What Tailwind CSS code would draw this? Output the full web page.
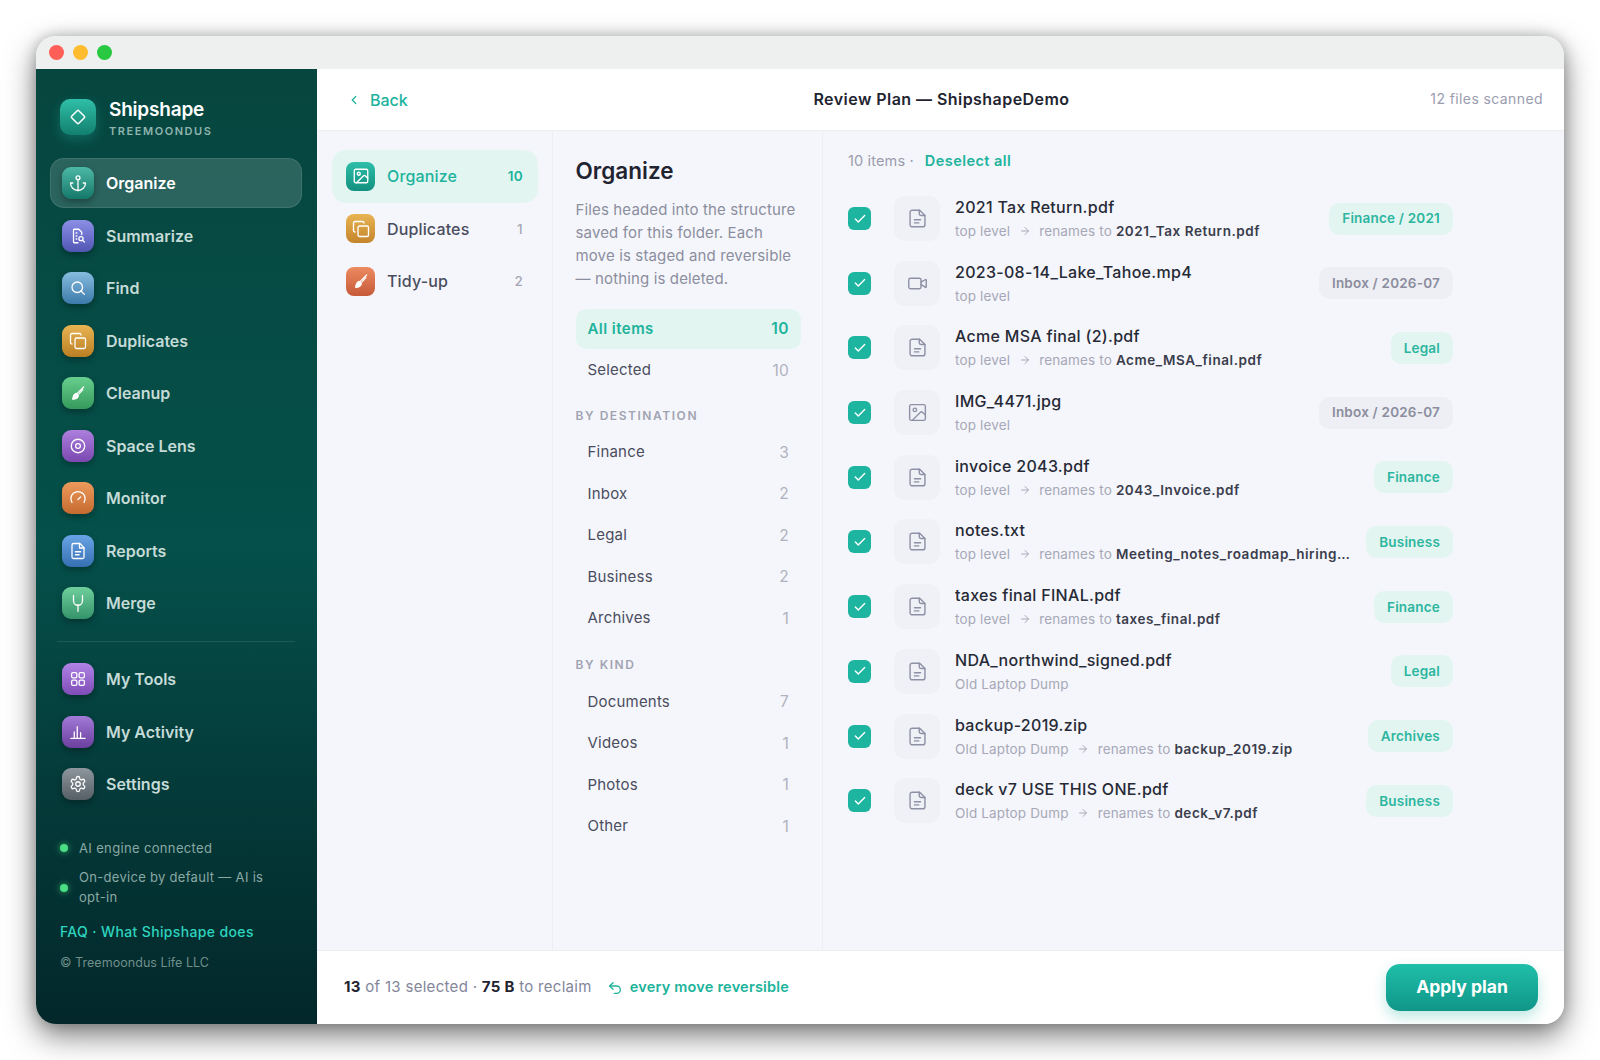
<!DOCTYPE html>
<html lang="en">
  <head>
    <meta charset="UTF-8" />
    <title>Shipshape</title>
    <script src="https://cdn.jsdelivr.net/npm/@tailwindcss/browser@4"></script>
  </head>
  <body class="bg-white h-[1060px] overflow-hidden pt-[36px] px-[36px] font-['Inter',sans-serif] antialiased">
    <div class="w-[1528px] h-[988px] rounded-[20px] overflow-hidden flex flex-col shadow-[0_12px_30px_rgba(0,0,0,0.5),0_0_14px_rgba(0,0,0,0.22)]">
      <!-- Title bar -->
      <div class="h-[33px] bg-[#edf0ef] flex items-center gap-[9px] pl-[13px] shrink-0">
        <span class="w-[15px] h-[15px] rounded-full bg-[#ff5f57]"></span>
        <span class="w-[15px] h-[15px] rounded-full bg-[#febc2e]"></span>
        <span class="w-[15px] h-[15px] rounded-full bg-[#28c840]"></span>
      </div>

      <div class="flex flex-1 min-h-0">
        <!-- Sidebar -->
        <aside class="w-[281px] shrink-0 flex flex-col pl-[14px] pr-[15px] bg-linear-to-b from-[#06463f] via-[#05504a] to-[#03272a]">
          <div class="flex items-center gap-[13px] h-[36px] mt-[30px] ml-[10px]">
            <div class="w-[36px] h-[36px] rounded-[10px] bg-linear-to-b from-[#2fbfa8] to-[#12806f] flex items-center justify-center shadow-[0_4px_12px_rgba(45,212,191,0.25)]">
              <svg class="w-[22px] h-[22px]" viewBox="0 0 24 24" fill="none" stroke="white" stroke-width="1.6"><rect x="6.5" y="6.5" width="11" height="11" rx="1.2" transform="rotate(45 12 12)" /></svg>
            </div>
            <div>
              <div class="text-[19px] leading-[26px] font-semibold text-white tracking-[-0.2px]">Shipshape</div>
              <div class="mt-[1px] text-[11px] leading-[14px] font-semibold text-[#8fb5ae] tracking-[1.55px]">TREEMOONDUS</div>
            </div>
          </div>
          <nav id="mainNav" class="mt-[23px] flex flex-col gap-[2.5px]"></nav>
          <div class="h-px bg-white/10 mx-[7px] mt-[13px]"></div>
          <nav id="toolNav" class="mt-[12px] flex flex-col gap-[2.5px]"></nav>
          <div class="mt-[29px] ml-[10px] flex items-center gap-[11px] text-[13px] leading-[20px] tracking-[0.35px] text-[#8aa9a4]">
            <span class="w-[8px] h-[8px] rounded-full bg-[#4ade80] shadow-[0_0_6px_rgba(74,222,128,0.7)] shrink-0"></span>
            AI engine connected
          </div>
          <div class="mt-[10px] ml-[10px] flex items-center gap-[11px] text-[13px] leading-[19.5px] tracking-[0.3px] text-[#8aa9a4] w-[225px]">
            <span class="w-[8px] h-[8px] rounded-full bg-[#4ade80] shadow-[0_0_6px_rgba(74,222,128,0.7)] shrink-0"></span>
            <span>On-device by default — AI is opt-in</span>
          </div>
          <div class="mt-[15px] ml-[10px] text-[14px] leading-[20px] tracking-[0.36px] font-medium text-[#2dd4bf]">FAQ · What Shipshape does</div>
          <div class="mt-[12px] ml-[10px] text-[12.5px] leading-[18px] tracking-[0.05px] text-[#6f8f8b]">© Treemoondus Life LLC</div>
        </aside>

        <!-- Main -->
        <main class="flex-1 min-w-0 flex flex-col bg-white">
          <header class="h-[62px] shrink-0 flex items-center justify-between px-[21px] border-b border-[#eceef2]">
            <div class="flex items-center gap-[9px] text-[16px] font-medium text-[#20b39c] w-[220px] pl-[9px]">
              <svg class="w-[14px] h-[14px]" viewBox="0 0 24 24" fill="none" stroke="currentColor" stroke-width="2.2" stroke-linecap="round" stroke-linejoin="round"><path d="m15 18-6-6 6-6" /></svg>
              Back
            </div>
            <div class="text-[16px] font-semibold tracking-[0.45px] -mt-[2px] ml-[2px] text-[#1f2430]">Review Plan — ShipshapeDemo</div>
            <div class="w-[220px] text-right text-[14px] tracking-[0.4px] -mt-[2px] text-[#9a9cb0]">12 files scanned</div>
          </header>

          <div class="flex-1 min-h-0 flex bg-[#f5f6fb]">
            <!-- Tool column -->
            <section class="w-[236px] shrink-0 border-r border-[#eceef2] pl-[15px] pr-[14px] pt-[19px]">
              <div id="toolTabs" class="flex flex-col w-[206px]"></div>
            </section>

            <!-- Filter column -->
            <section class="w-[270px] shrink-0 border-r border-[#eceef2] pl-[22.5px] pr-[21px] pt-[24px]">
              <h2 class="text-[22.5px] leading-[32px] font-semibold text-[#1f2430]">Organize</h2>
              <p class="mt-[11px] text-[15px] leading-[23px] tracking-[0.14px] text-[#8b8e9e]">Files headed into the structure saved for this folder. Each move is staged and reversible — nothing is deleted.</p>
              <div id="filters" class="mt-[19px]"></div>
            </section>

            <!-- File list -->
            <section class="flex-1 min-w-0 pl-[25px] pt-[20px]">
              <div class="flex items-center h-[20px] text-[14.5px]">
                <span class="text-[#9a9cac] tracking-[0.15px]">10 items ·</span>
                <span class="ml-[11px] font-semibold tracking-[0.45px] text-[#20b39c]">Deselect all</span>
              </div>
              <div id="files" class="mt-[25px] w-[605px] flex flex-col gap-[19.7px]"></div>
            </section>
          </div>

          <!-- Footer -->
          <footer class="h-[74px] shrink-0 flex items-center justify-between pl-[27px] pr-[26px] border-t border-[#eceef2]">
            <div class="flex items-center text-[15px] text-[#83869a]">
              <span class="tracking-[0.3px]"><b class="font-bold text-[#1f2430]">13</b> of 13 selected · <b class="font-bold text-[#1f2430]">75 B</b> to reclaim</span>
              <svg class="ml-[15px] w-[16px] h-[16px] text-[#20b39c]" viewBox="0 0 24 24" fill="none" stroke="currentColor" stroke-width="2" stroke-linecap="round" stroke-linejoin="round"><path d="M9 14 4 9l5-5" /><path d="M4 9h10.500a5.500 5.500 0 0 1 0 11H11" /></svg>
              <span class="ml-[7px] -mt-[1px] text-[14.5px] font-semibold tracking-[0.22px] text-[#20b39c]">every move reversible</span>
            </div>
            <button class="w-[152px] h-[47px] rounded-[14px] text-[17.5px] font-bold text-white bg-linear-to-b from-[#1fbfa9] to-[#109688] shadow-[0_6px_14px_rgba(32,179,156,0.3)]">Apply plan</button>
          </footer>
        </main>
      </div>
    </div>

    <script>
      const icons = {
        anchor: '<circle cx="12" cy="5" r="2.6"/><path d="M12 22V8"/><path d="M5 12H2a10 10 0 0 0 20 0h-3"/>',
        summarize: '<path d="M12 21H7a1 1 0 0 1-1-1V4a1 1 0 0 1 1-1h6l4 4v3"/><path d="M9.5 8h1M9.5 12h1M9.5 16h1"/><circle cx="16" cy="15.5" r="2.8"/><path d="m18.2 17.8 2.3 2.3"/>',
        search: '<circle cx="11" cy="11" r="7"/><path d="m20.5 20.5-4.5-4.5"/>',
        copy: '<rect x="8" y="8" width="14" height="14" rx="2"/><path d="M4 16c-1.1 0-2-.9-2-2V4c0-1.1.9-2 2-2h10c1.1 0 2 .9 2 2"/>',
        brush: '<path d="M19.500 4 11 12.500"/><path d="M18.500 7.500 13 13.500"/><path fill="white" d="M9.500 12.500l3 3c-.6 3-3.500 4.800-7.500 4.800.3-3.500 1.500-6.500 4.500-7.800z"/>',
        target: '<circle cx="12" cy="12" r="9"/><circle cx="12" cy="12" r="3.2"/>',
        gauge: '<path d="M4 18a9.500 9.500 0 1 1 16 0"/><path d="m12 14 3.500-3.500"/>',
        report: '<path d="M14.500 2H6a2 2 0 0 0-2 2v16a2 2 0 0 0 2 2h12a2 2 0 0 0 2-2V7.500Z"/><path d="M14 2v6h6"/><path d="M8.500 13h7M8.500 17h5"/>',
        merge: '<path d="M6 2v7a6 6 0 0 0 12 0V2"/><path d="M12 15v8"/>',
        grid: '<rect x="3.500" y="3.500" width="7" height="7" rx="1.800"/><rect x="13.500" y="3.500" width="7" height="7" rx="1.800"/><rect x="3.500" y="13.500" width="7" height="7" rx="1.800"/><rect x="13.500" y="13.500" width="7" height="7" rx="1.800"/>',
        chart: '<path d="M2.500 20.500h19"/><path d="M7 20V12M11 20V5M15.500 20v-7"/>',
        gear: '<path d="M12.220 2h-.44a2 2 0 0 0-2 2v.18a2 2 0 0 1-1 1.730l-.43.25a2 2 0 0 1-2 0l-.15-.08a2 2 0 0 0-2.730.73l-.22.38a2 2 0 0 0 .73 2.730l.15.1a2 2 0 0 1 1 1.720v.51a2 2 0 0 1-1 1.740l-.15.09a2 2 0 0 0-.73 2.730l.22.38a2 2 0 0 0 2.730.73l.15-.08a2 2 0 0 1 2 0l.43.25a2 2 0 0 1 1 1.730V20a2 2 0 0 0 2 2h.44a2 2 0 0 0 2-2v-.18a2 2 0 0 1 1-1.730l.43-.25a2 2 0 0 1 2 0l.15.08a2 2 0 0 0 2.730-.73l.22-.39a2 2 0 0 0-.73-2.730l-.15-.08a2 2 0 0 1-1-1.740v-.5a2 2 0 0 1 1-1.740l.15-.09a2 2 0 0 0 .73-2.730l-.22-.38a2 2 0 0 0-2.730-.73l-.15.08a2 2 0 0 1-2 0l-.43-.25a2 2 0 0 1-1-1.730V4a2 2 0 0 0-2-2z"/><circle cx="12" cy="12" r="3"/>',
        image: '<rect x="3" y="3" width="18" height="18" rx="2"/><circle cx="9" cy="9" r="2"/><path d="m21 15-3.086-3.086a2 2 0 0 0-2.828 0L6 21"/>',
        file: '<path d="M14.500 2.500H6a2.500 2.500 0 0 0-2.500 2.500v14A2.500 2.500 0 0 0 6 21.500h12a2.500 2.500 0 0 0 2.500-2.500V8.500Z"/><path d="M14 2.500v4a2 2 0 0 0 2 2h4.500"/><path d="M8.500 13.500h7M8.500 17h5"/>',
        video: '<path d="m16 13 5.223 3.482a.5.5 0 0 0 .777-.416V7.870a.5.5 0 0 0-.752-.432L16 10.500"/><rect x="2" y="6" width="14" height="12" rx="2"/>',
      };

      function svg(name, cls, width) {
        return `<svg class="${cls}" viewBox="0 0 24 24" fill="none" stroke="currentColor" stroke-width="${width}" stroke-linecap="round" stroke-linejoin="round">${icons[name]}</svg>`;
      }

      function navItem(item) {
        const rowCls = item.active
          ? "bg-white/15 border border-white/10 text-white"
          : "border border-transparent text-[#c5dbd7]";
        return `
          <div class="h-[50px] rounded-[14px] flex items-center pl-[11px] gap-[12px] ${rowCls}">
            <span class="w-[32px] h-[32px] rounded-[9px] flex items-center justify-center text-white shadow-[0_3px_6px_rgba(0,0,0,0.3)] ${item.bg}">
              ${svg(item.icon, "w-[18px] h-[18px]", 1.7)}
            </span>
            <span class="text-[16px] font-semibold">${item.label}</span>
          </div>`;
      }

      const mainNav = [
        { label: "Organize", icon: "anchor", bg: "bg-linear-to-b from-[#4cb8a6] to-[#13796a]", active: true },
        { label: "Summarize", icon: "summarize", bg: "bg-linear-to-b from-[#8d8fe6] to-[#5156b4]" },
        { label: "Find", icon: "search", bg: "bg-linear-to-b from-[#86bddf] to-[#3d7aaa]" },
        { label: "Duplicates", icon: "copy", bg: "bg-linear-to-b from-[#e8b452] to-[#bb7f22]" },
        { label: "Cleanup", icon: "brush", bg: "bg-linear-to-b from-[#67cf8d] to-[#349a5d]" },
        { label: "Space Lens", icon: "target", bg: "bg-linear-to-b from-[#ad7fdd] to-[#7a48b0]" },
        { label: "Monitor", icon: "gauge", bg: "bg-linear-to-b from-[#ec9a5c] to-[#c66a30]" },
        { label: "Reports", icon: "report", bg: "bg-linear-to-b from-[#69a5e6] to-[#366fb2]" },
        { label: "Merge", icon: "merge", bg: "bg-linear-to-b from-[#6fcf9c] to-[#34946a]" },
      ];
      const toolNav = [
        { label: "My Tools", icon: "grid", bg: "bg-linear-to-b from-[#b184e6] to-[#7e4cb6]" },
        { label: "My Activity", icon: "chart", bg: "bg-linear-to-b from-[#a27ad8] to-[#6b3f9e]" },
        { label: "Settings", icon: "gear", bg: "bg-linear-to-b from-[#8e979d] to-[#565f66]" },
      ];
      document.getElementById("mainNav").innerHTML = mainNav.map(navItem).join("");
      document.getElementById("toolNav").innerHTML = toolNav.map(navItem).join("");

      const tabs = [
        { label: "Organize", count: 10, icon: "image", bg: "bg-linear-to-b from-[#2dbfa9] to-[#12907f]", active: true },
        { label: "Duplicates", count: 1, icon: "copy", bg: "bg-linear-to-b from-[#e8b452] to-[#c4852a]" },
        { label: "Tidy-up", count: 2, icon: "brush", bg: "bg-linear-to-b from-[#ec8a60] to-[#c65a3a]" },
      ];
      document.getElementById("toolTabs").innerHTML = tabs
        .map(
          (t) => `
          <div class="h-[52.5px] rounded-[14px] flex items-center pl-[14px] pr-[15px] ${t.active ? "bg-[#e3f5f1]" : ""}">
            <span class="w-[29px] h-[29px] rounded-[8px] flex items-center justify-center text-white ${t.bg}">${svg(t.icon, "w-[18px] h-[18px]", 1.8)}</span>
            <span class="ml-[12px] text-[16px] font-medium tracking-[0.15px] ${t.active ? "text-[#20b39c]" : "text-[#4a4d5e]"}">${t.label}</span>
            <span class="ml-auto text-[13.5px] tracking-[0.3px] ${t.active ? "font-semibold text-[#20b39c]" : "font-medium text-[#a5a7b5]"}">${t.count}</span>
          </div>`
        )
        .join("");

      function filterRow(label, count, active) {
        return `
          <div class="h-[40px] mb-[1.5px] rounded-[10px] flex items-center justify-between pl-[12px] pr-[12px] text-[15px] tracking-[0.2px] ${active ? "bg-[#e3f5f1] text-[#20b39c] font-semibold" : "text-[#4a4d5e]"}">
            <span class="${active ? "tracking-[0.45px]" : ""}">${label}</span>
            <span class="text-[15.5px] ${active ? "tracking-[0.5px]" : "text-[#b0b2bf]"}">${count}</span>
          </div>`;
      }
      function heading(text, cls) {
        return `<div class="${cls} h-[18px] text-[12px] leading-[18px] font-semibold tracking-[1.55px] text-[#a0a3b2]">${text}</div>`;
      }
      document.getElementById("filters").innerHTML =
        filterRow("All items", 10, true) +
        filterRow("Selected", 10) +
        heading("BY DESTINATION", "mt-[16px] mb-[8px]") +
        filterRow("Finance", 3) +
        filterRow("Inbox", 2) +
        filterRow("Legal", 2) +
        filterRow("Business", 2) +
        filterRow("Archives", 1) +
        heading("BY KIND", "mt-[17.5px] mb-[8px]") +
        filterRow("Documents", 7) +
        filterRow("Videos", 1) +
        filterRow("Photos", 1) +
        filterRow("Other", 1);

      const files = [
        { name: "2021 Tax Return.pdf", from: "top level", to: "2021_Tax Return.pdf", tag: "Finance / 2021" },
        { name: "2023-08-14_Lake_Tahoe.mp4", from: "top level", tag: "Inbox / 2026-07", gray: true, icon: "video" },
        { name: "Acme MSA final (2).pdf", from: "top level", to: "Acme_MSA_final.pdf", tag: "Legal" },
        { name: "IMG_4471.jpg", from: "top level", tag: "Inbox / 2026-07", gray: true, icon: "image" },
        { name: "invoice 2043.pdf", from: "top level", to: "2043_Invoice.pdf", tag: "Finance" },
        { name: "notes.txt", from: "top level", to: "Meeting_notes_roadmap_hiring…", tag: "Business" },
        { name: "taxes final FINAL.pdf", from: "top level", to: "taxes_final.pdf", tag: "Finance" },
        { name: "NDA_northwind_signed.pdf", from: "Old Laptop Dump", tag: "Legal" },
        { name: "backup-2019.zip", from: "Old Laptop Dump", to: "backup_2019.zip", tag: "Archives" },
        { name: "deck v7 USE THIS ONE.pdf", from: "Old Laptop Dump", to: "deck_v7.pdf", tag: "Business" },
      ];
      const arrow =
        '<svg class="w-[12px] h-[12px] mx-[8.5px] shrink-0" viewBox="0 0 24 24" fill="none" stroke="currentColor" stroke-width="2" stroke-linecap="round" stroke-linejoin="round"><path d="M5 12h14"/><path d="m12 5 7 7-7 7"/></svg>';

      document.getElementById("files").innerHTML = files
        .map(
          (f) => `
          <div class="h-[45px] flex items-center">
            <span class="w-[23px] h-[23px] rounded-[6px] bg-[#1db5a0] flex items-center justify-center shrink-0">
              <svg class="w-[14px] h-[14px]" viewBox="0 0 24 24" fill="none" stroke="white" stroke-width="2.4" stroke-linecap="round" stroke-linejoin="round"><path d="M20 6 9 17l-5-5"/></svg>
            </span>
            <span class="ml-[23px] w-[46px] h-[45px] rounded-[11px] bg-[#f0f1f6] flex items-center justify-center text-[#8e90a6] shrink-0">
              ${svg(f.icon || "file", "w-[21px] h-[21px]", 1.6)}
            </span>
            <div class="ml-[15px] min-w-0 flex-1">
              <div class="text-[16px] leading-[22px] font-medium tracking-[0.3px] text-[#262a36] truncate">${f.name}</div>
              <div class="mt-[3px] flex items-center text-[13.5px] leading-[20px] tracking-[0.15px] text-[#a6a8b8]">
                <span class="shrink-0">${f.from}</span>
                ${f.to ? `${arrow}<span class="shrink-0">renames to&nbsp;</span><span class="font-semibold tracking-[0.55px] text-[#3a3d4c] whitespace-nowrap">${f.to}</span>` : ""}
              </div>
            </div>
            <span class="ml-[17px] h-[32px] px-[13px] rounded-[10px] flex items-center text-[13.5px] font-semibold tracking-[0.2px] shrink-0 ${f.gray ? "bg-[#eeeff4] text-[#8b8d9e]" : "bg-[#e3f5f1] text-[#2cb59f]"}">${f.tag}</span>
          </div>`
        )
        .join("");
    </script>
  </body>
</html>
